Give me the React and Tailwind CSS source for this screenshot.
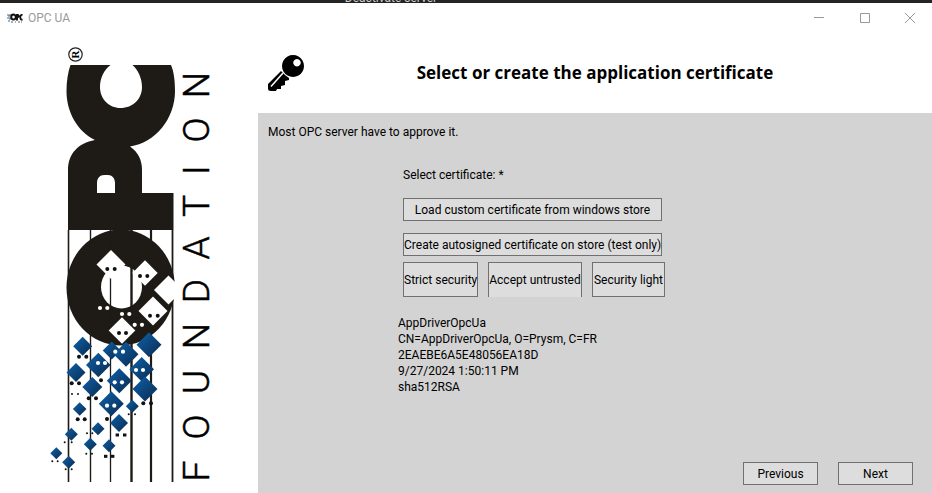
const BLUE = [
  [82.7, 346.3, 9.5], [111.7, 350.5, 9], [126, 354.3, 12.5], [149, 344.7, 12.5],
  [98.3, 365, 12.3], [141.7, 369.3, 12.3], [76, 372.5, 9.5], [119.3, 380.7, 12.5],
  [92.3, 387, 10], [145, 389, 12.5], [111.3, 403.7, 12.5], [132.3, 406.3, 6.5],
  [79.7, 409, 6.8], [119, 423, 9], [98, 428.7, 6.5], [71.3, 434.3, 6.5],
  [90.3, 444.3, 6.5], [109, 445.7, 6.5], [56.3, 453.3, 6], [68.7, 462.3, 6.5],
];
const WHITE = [[111, 264.5, 14.5], [145, 273, 12.7], [168.5, 290, 14.5], [153, 311, 14.5], [122, 330.5, 13.3]];
const BLACK_DOTS = [
  [107.3, 269], [114.7, 269], [140, 276], [147.3, 276], [150, 315.7], [157.7, 315.7], [119, 333], [126, 333],
  [79, 356.7], [86.3, 356.7], [71.7, 383.3], [79, 383.3], [88.7, 398.3], [96, 398.3], [101, 380.3],
  [77.7, 419.3], [84.7, 419.3], [107, 419], [143.3, 403.3], [151, 403.3],
];
const WHITE_DOTS = [
  [100, 308], [107.3, 308], [122, 314], [129.3, 314], [134.7, 324.8], [142, 324.8],
  [115.3, 351.7], [123, 351.7], [98, 363], [105, 363], [136, 370], [143, 370],
  [114.7, 382.3], [122, 382.3], [107, 405.7], [114.3, 405.7],
];
const SMALL_DOTS = [
  [72, 394], [78, 394], [128.7, 414.3], [135, 414.3], [87, 433.3], [92.3, 433.3], [64.7, 442.3], [71.7, 442.3],
  [86.3, 453.7], [92, 453.7], [52.3, 461.3], [57.7, 461.3], [65.7, 469.3], [71.7, 469.3],
];
const SQUARES = [[117.3, 435], [124.7, 435], [105.7, 456.3], [112.7, 456.3]];
const LINES = [[68.5, 1.6], [90.5, 1.4], [110.5, 1.3], [131.5, 2.4], [151, 2.2], [172.5, 1.8]];
const WORD = [
  ["F", 471], ["O", 427], ["U", 382], ["N", 336], ["D", 291],
  ["A", 248], ["T", 206], ["I", 170], ["O", 130], ["N", 85],
];

const diamond = ([x, y, r]) => `M${x} ${y - r}L${x + r} ${y}L${x} ${y + r}L${x - r} ${y}Z`;

function FoundationLogo() {
  return (
    <svg viewBox="0 33 258 460" className="block w-full" role="img" aria-label="OPC Foundation">
      <defs>
        <linearGradient id="tile" x1="0" y1="0" x2="1" y2="1">
          <stop offset="0.2" stopColor="#0d5799" />
          <stop offset="0.8" stopColor="#0b3560" />
        </linearGradient>
        <clipPath id="mark">
          <rect x="40" y="33" width="135" height="460" />
        </clipPath>
      </defs>
      <g clipPath="url(#mark)">
        <g fill="#1e1a16">
          <path d="M70.5 65H110.500C104 70 100 78 100 87C100 99 109 108 120.500 108C133 108 142 99 142 87C142 78 138 70 132.500 65H171C174 72 175 81 175 91C175 119 155 143 130 146.500C138 152 142 160 142 170V193H173.500V230H68V170C68 154 78 143 95 140C77 131 66.500 112 66.500 91C66.500 81 68 72 70.500 65Z M97 193H115V183C115 178 112 175 108 175H104C100 175 97 178 97 183Z" fillRule="evenodd" />
          <ellipse cx="120.700" cy="287.500" rx="54.200" ry="58" />
        </g>
        <ellipse cx="121.500" cy="287" rx="20.500" ry="21.500" fill="#fff" />
        {LINES.map(([x, w]) => (
          <line key={x} x1={x} x2={x} y1="230" y2="482" stroke="#1e1a16" strokeWidth={w} />
        ))}
        {WHITE.map((d) => <path key={d[0]} d={diamond(d)} fill="#fff" />)}
        {BLUE.map((d) => <path key={d[0]} d={diamond(d)} fill="url(#tile)" />)}
        {BLACK_DOTS.map(([x, y]) => <circle key={`${x}-${y}`} cx={x} cy={y} r="2" fill="#111" />)}
        {WHITE_DOTS.map(([x, y]) => <circle key={`${x}-${y}`} cx={x} cy={y} r="2.100" fill="#fff" />)}
        {SMALL_DOTS.map(([x, y]) => <circle key={`${x}-${y}`} cx={x} cy={y} r="1" fill="#111" />)}
        {SQUARES.map(([x, y]) => <rect key={`${x}-${y}`} x={x - 1.7} y={y - 1.5} width="3.400" height="3" fill="#111" />)}
      </g>
      <circle cx="75.500" cy="54.500" r="6.700" fill="none" stroke="#222" strokeWidth="1.200" />
      <text transform="translate(79 54.5) rotate(-90)" textAnchor="middle" className="font-['Liberation_Serif',serif] text-[11px] font-bold">R</text>
      {WORD.map(([letter, y]) => (
        <text key={y} transform={`translate(209 ${y}) rotate(-90)`} textAnchor="middle" stroke="#000" strokeWidth="0.500" className="font-[Roboto,sans-serif] text-[37px] font-light">
          {letter}
        </text>
      ))}
    </svg>
  );
}

function TitleIcon() {
  return (
    <svg viewBox="0 0 16 11" className="h-[11px] w-4" aria-hidden="true">
      <path d="M0 2h4M1 3h3M0 5h4M2 6h3M1 8h2M4 9h2M8 9h1M11 9h2M14 9h1" stroke="#4d6d85" />
      <path d="M6.500 1.500c-3 0-3 5 0 5s3-5 0-5zM10 7.500V2h1q1.500 1.500-1 2.500M15.500 2c-3-1-3 5.500 0 4.500" fill="none" stroke="#111" strokeWidth="1.900" />
    </svg>
  );
}

function KeyIcon() {
  return (
    <svg viewBox="268 55 37 37" className="h-[37px] w-[37px] shrink-0" aria-hidden="true">
      <path fillRule="evenodd" d="M293 55a11 11 0 1 0 .01 0zM297 59a3.700 3.700 0 1 1-.01 0z" />
      <path d="M281 71L268 84V88.500Q268 91 271 91H276L277 89L281 89L281 86L285 85L285 81L289 80L289 78L285 75Z" />
      <path d="M283 73L271 86.500" stroke="#fff" strokeWidth="1.500" />
    </svg>
  );
}

function Btn({ className = "", children }) {
  return (
    <button type="button" className={`border border-[#707070] bg-[#ddd] whitespace-nowrap ${className}`}>
      {children}
    </button>
  );
}

export default function App() {
  return (
    <div className="flex min-h-screen flex-col bg-white font-[Roboto,'Open_Sans',sans-serif] text-[12px] leading-4 text-black">
      <div className="flex h-[3px] justify-center overflow-hidden bg-[#252425] text-[#ccc]">
        <span className="-mt-[10px] mr-[150px] h-4 leading-4">Deactivate server</span>
      </div>
      <header className="flex h-[30px] items-center pl-[7px] text-[#999]">
        <TitleIcon />
        <span className="ml-[5px] flex-1">OPC UA</span>
        <button type="button" aria-label="Minimize" className="flex h-full w-[46px] items-center justify-center">
          <svg viewBox="0 0 10 10" className="h-[10px] w-[10px]"><path d="M0 4.500H10" stroke="currentColor" /></svg>
        </button>
        <button type="button" aria-label="Maximize" className="flex h-full w-[45px] items-center justify-center">
          <svg viewBox="0 0 10 10" className="h-[10px] w-[10px]"><path d="M.5.5h9v9h-9z" fill="none" stroke="currentColor" /></svg>
        </button>
        <button type="button" aria-label="Close" className="flex h-full w-[45px] items-center justify-center">
          <svg viewBox="0 0 10 10" className="h-[10px] w-[10px]"><path d="M0 0L10 10M10 0L0 10" stroke="currentColor" /></svg>
        </button>
      </header>
      <div className="flex flex-1">
        <aside className="w-[258px] shrink-0">
          <FoundationLogo />
        </aside>
        <main className="flex flex-1 flex-col">
          <div className="flex h-20 items-center pl-[10px]">
            <KeyIcon />
            <h1 className="flex-1 pr-[47px] text-center font-['Open_Sans',sans-serif] text-[17px] leading-6 font-bold">Select or create the application certificate</h1>
          </div>
          <section className="flex flex-1 flex-col bg-[#d3d3d3] px-[10px] pt-[11px] pb-2">
            <p>Most OPC server have to approve it.</p>
            <div className="ml-[135px] flex flex-col items-start">
              <p className="mt-[27px]">Select certificate: *</p>
              <Btn className="mt-[15px] h-[23px] w-[259px]">Load custom certificate from windows store</Btn>
              <Btn className="mt-3 h-[23px] w-[259px]">Create autosigned certificate on store (test only)</Btn>
              <div className="mt-[6px] flex gap-[10px]">
                <Btn className="h-[35px] w-[75px]">Strict security</Btn>
                <Btn className="h-[35px] w-[94px] border-b-0">Accept untrusted</Btn>
                <Btn className="h-[35px] w-[73px]">Security light</Btn>
              </div>
            </div>
            <div className="mt-[18px] ml-[130px]">
              <p>AppDriverOpcUa</p>
              <p>CN=AppDriverOpcUa, O=Prysm, C=FR</p>
              <p>2EAEBE6A5E48056EA18D</p>
              <p>9/27/2024 1:50:11 PM</p>
              <p>sha512RSA</p>
            </div>
            <div className="mt-auto flex justify-end gap-5 pr-[9px]">
              <Btn className="h-[23px] w-[75px]">Previous</Btn>
              <Btn className="h-[23px] w-[75px]">Next</Btn>
            </div>
          </section>
        </main>
      </div>
    </div>
  );
}
